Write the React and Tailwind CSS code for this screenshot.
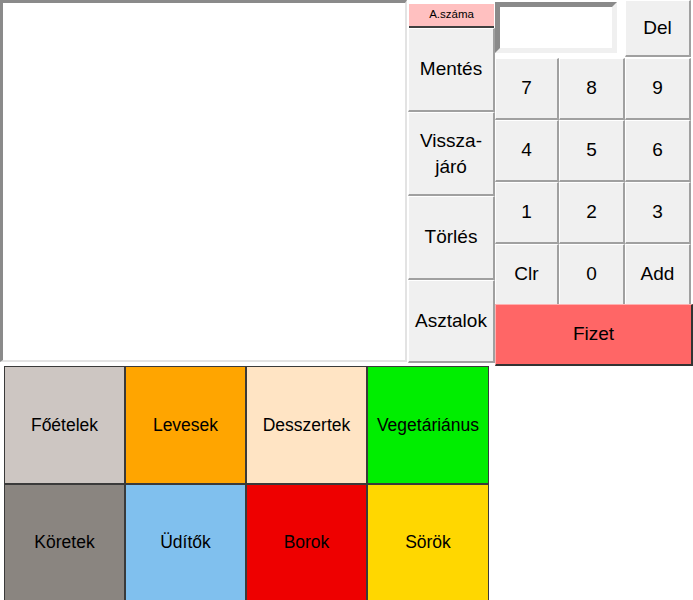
const CATEGORIES = [
  { label: 'Főételek', bg: 'bg-[#cdc6c2]' },
  { label: 'Levesek', bg: 'bg-[#ffa500]' },
  { label: 'Desszertek', bg: 'bg-[#ffe4c4]' },
  { label: 'Vegetáriánus', bg: 'bg-[#00ee00]' },
  { label: 'Köretek', bg: 'bg-[#8a8580]' },
  { label: 'Üdítők', bg: 'bg-[#80c0ee]' },
  { label: 'Borok', bg: 'bg-[#ee0000]' },
  { label: 'Sörök', bg: 'bg-[#ffd700]' },
]

const KEYS = ['7', '8', '9', '4', '5', '6', '1', '2', '3', 'Clr', '0', 'Add']

// classic raised win-forms button look
const btn =
  'flex items-center justify-center bg-[#f0f0f0] border-t border-l border-t-white border-l-white border-b-2 border-r-2 border-b-[#a0a0a0] border-r-[#a0a0a0] text-black'

export default function App() {
  return (
    <div
      className="w-[693px] h-[600px] bg-white overflow-hidden"
      style={{ fontFamily: '"Liberation Sans", Arial, sans-serif' }}
    >
      {/* top area */}
      <div className="flex h-[366px]">
        {/* order list */}
        <div className="w-[407px] h-[362px] bg-white border-t-[3px] border-l-[3px] border-b-2 border-r-2 border-t-[#8a8a8a] border-l-[#8a8a8a] border-b-[#e3e3e3] border-r-[#e3e3e3]" />

        {/* actions */}
        <div className="w-[88px] flex flex-col pl-[1px]">
          <div className="mt-[4px] mx-[1px] h-[24px] flex items-center justify-center bg-[#ffc0c0] border-b-2 border-b-[#404040] text-[11.5px] text-black">
            A.száma
          </div>
          <button className={`${btn} h-[84px] text-[19px]`}>Mentés</button>
          <button className={`${btn} h-[84px] text-[19px] leading-[26px] flex-col`}>
            <span>Vissza-</span>
            <span>járó</span>
          </button>
          <button className={`${btn} h-[84px] text-[19px]`}>Törlés</button>
          <button className={`${btn} h-[83px] text-[19px]`}>Asztalok</button>
        </div>

        {/* numpad */}
        <div className="w-[198px] flex flex-col">
          <div className="flex h-[58px]">
            <div className="w-[122px] h-[51px] mt-[2px] border-[5px] border-t-[#8a8a8a] border-l-[#8a8a8a] border-b-[#f0f0f0] border-r-[#f0f0f0] bg-white" />
            <div className="w-[8px]" />
            <button className={`${btn} w-[66px] h-[57px] text-[19px]`}>Del</button>
          </div>
          <div className="grid grid-cols-[64px_66px_66px] grid-rows-[62px_62px_62px_62px] w-[196px]">
            {KEYS.map((k) => (
              <button key={k} className={`${btn} text-[19px]`}>
                {k}
              </button>
            ))}
          </div>
          <button className="-mt-[2px] w-[198px] h-[62px] flex items-center justify-center bg-[#ff6666] border-t border-l border-t-[#ffb0b0] border-l-[#ffb0b0] border-b-2 border-r-2 border-b-[#333] border-r-[#333] text-[19px] text-black">
            Fizet
          </button>
        </div>
      </div>

      {/* categories */}
      <div className="ml-[4px] grid grid-cols-[121px_121px_121px_122px] grid-rows-[118px_117px] w-[485px]">
        {CATEGORIES.map((c) => (
          <button
            key={c.label}
            className={`${c.bg} flex items-center justify-center border border-[#3a3a3a] text-[17.5px] text-black`}
          >
            {c.label}
          </button>
        ))}
      </div>
    </div>
  )
}
